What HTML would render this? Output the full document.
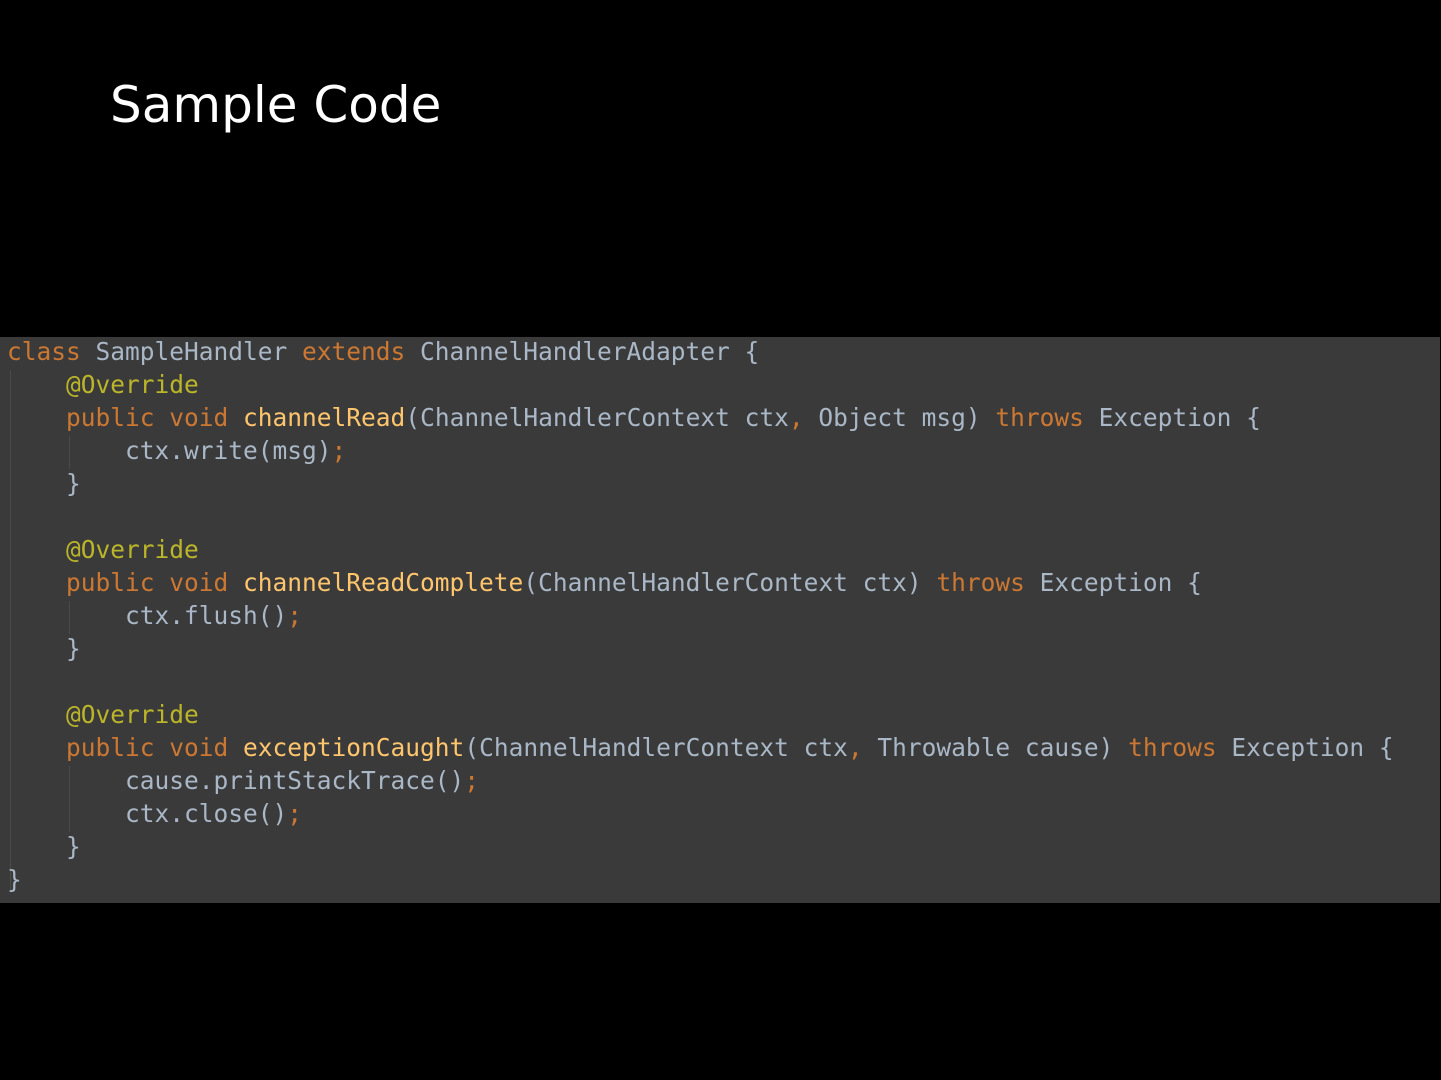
<!DOCTYPE html>
<html><head><meta charset="utf-8"><style>
html,body{margin:0;padding:0;background:#000;width:1441px;height:1080px;overflow:hidden}
h1{position:absolute;left:110px;top:76px;margin:0;font:400 50px "DejaVu Sans","Liberation Sans",sans-serif;color:#fff}
.code{position:absolute;left:0;top:337px;width:1440px;height:566px;background:#3a3a3a}
pre{margin:0;position:absolute;left:7px;top:-2px;font:24.5px/33px "DejaVu Sans Mono","Liberation Mono",monospace;color:#a9b7c6}
.k{color:#cc7832}.a{color:#bbb529}.m{color:#ffc66d}
.g{position:absolute;width:1px;background:#4a4a4a}
</style></head><body>
<h1>Sample Code</h1>
<div class="code">
<div class="g" style="left:10px;top:33px;height:520px"></div>
<div class="g" style="left:69px;top:99px;height:33px"></div>
<div class="g" style="left:69px;top:264px;height:33px"></div>
<div class="g" style="left:69px;top:429px;height:66px"></div>
<pre><span class="k">class</span> SampleHandler <span class="k">extends</span> ChannelHandlerAdapter {
    <span class="a">@Override</span>
    <span class="k">public void</span> <span class="m">channelRead</span>(ChannelHandlerContext ctx<span class="k">,</span> Object msg) <span class="k">throws</span> Exception {
        ctx.write(msg)<span class="k">;</span>
    }

    <span class="a">@Override</span>
    <span class="k">public void</span> <span class="m">channelReadComplete</span>(ChannelHandlerContext ctx) <span class="k">throws</span> Exception {
        ctx.flush()<span class="k">;</span>
    }

    <span class="a">@Override</span>
    <span class="k">public void</span> <span class="m">exceptionCaught</span>(ChannelHandlerContext ctx<span class="k">,</span> Throwable cause) <span class="k">throws</span> Exception {
        cause.printStackTrace()<span class="k">;</span>
        ctx.close()<span class="k">;</span>
    }
}</pre>
</div>
</body></html>
